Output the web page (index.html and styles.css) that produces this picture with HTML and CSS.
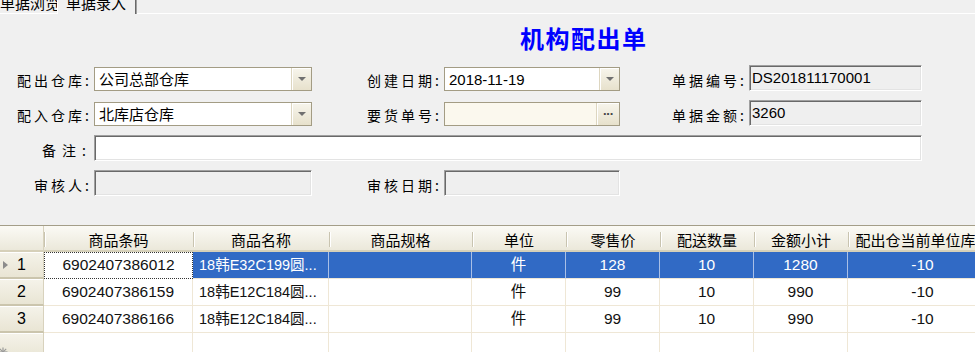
FILE: index.html
```html
<!DOCTYPE html>
<html lang="zh-CN">
<head>
<meta charset="utf-8">
<title>机构配出单</title>
<link rel="stylesheet" href="styles.css">
</head>
<body>
<div class="tabs">
  <div class="tab tab-browse"><span>单据浏览</span></div>
  <div class="tab tab-active"><span>单据录入</span></div>
  <div class="tab-rest"></div>
</div>

<h1 class="title">机构配出单</h1>

<div class="form">
  <label class="lbl">配出仓库:</label>
  <div class="combo"><span class="val">公司总部仓库</span><span class="dd"><i class="tri"></i></span></div>
  <label class="lbl">创建日期:</label>
  <div class="combo"><span class="val">2018-11-19</span><span class="dd"><i class="tri"></i></span></div>
  <label class="lbl">单据编号:</label>
  <div class="sunken">DS201811170001</div>

  <label class="lbl">配入仓库:</label>
  <div class="combo"><span class="val">北库店仓库</span><span class="dd"><i class="tri"></i></span></div>
  <label class="lbl">要货单号:</label>
  <div class="combo cream"><span class="val"></span><span class="dd dots">···</span></div>
  <label class="lbl">单据金额:</label>
  <div class="sunken">3260</div>

  <label class="lbl lbl-wide">备注:</label>
  <div class="sunken white span5"></div>

  <label class="lbl">审核人:</label>
  <div class="sunken"></div>
  <label class="lbl">审核日期:</label>
  <div class="sunken"></div>
</div>

<div class="grid">
  <div class="row head">
    <div class="rh corner"></div>
    <div class="hc">商品条码</div>
    <div class="hc">商品名称</div>
    <div class="hc">商品规格</div>
    <div class="hc">单位</div>
    <div class="hc">零售价</div>
    <div class="hc">配送数量</div>
    <div class="hc">金额小计</div>
    <div class="hc">配出仓当前单位库存</div>
  </div>
  <div class="row sel">
    <div class="rh"><i class="arrow"></i><span class="num">1</span></div>
    <div class="c ctr focus">6902407386012</div>
    <div class="c name">18韩E32C199圆...</div>
    <div class="c"></div>
    <div class="c ctr">件</div>
    <div class="c ctr">128</div>
    <div class="c ctr">10</div>
    <div class="c ctr">1280</div>
    <div class="c ctr">-10</div>
  </div>
  <div class="row">
    <div class="rh"><i class="arrow off"></i><span class="num">2</span></div>
    <div class="c ctr">6902407386159</div>
    <div class="c name">18韩E12C184圆...</div>
    <div class="c"></div>
    <div class="c ctr">件</div>
    <div class="c ctr">99</div>
    <div class="c ctr">10</div>
    <div class="c ctr">990</div>
    <div class="c ctr">-10</div>
  </div>
  <div class="row">
    <div class="rh"><i class="arrow off"></i><span class="num">3</span></div>
    <div class="c ctr">6902407386166</div>
    <div class="c name">18韩E12C184圆...</div>
    <div class="c"></div>
    <div class="c ctr">件</div>
    <div class="c ctr">99</div>
    <div class="c ctr">10</div>
    <div class="c ctr">990</div>
    <div class="c ctr">-10</div>
  </div>
  <div class="row">
    <div class="rh newrow"><svg class="star" width="10" height="10" viewBox="0 0 10 10"><g stroke="#9a9a9a" stroke-width="1.2"><line x1="5" y1="0.5" x2="5" y2="9.5"/><line x1="0.5" y1="5" x2="9.5" y2="5"/><line x1="1.8" y1="1.8" x2="8.2" y2="8.2"/><line x1="8.2" y1="1.8" x2="1.8" y2="8.2"/></g></svg></div>
    <div class="c"></div>
    <div class="c"></div>
    <div class="c"></div>
    <div class="c"></div>
    <div class="c"></div>
    <div class="c"></div>
    <div class="c"></div>
    <div class="c"></div>
  </div>
</div>
</body>
</html>
```
FILE: styles.css
```css
* { box-sizing: border-box; }

html, body {
  margin: 0;
  padding: 0;
}

body {
  width: 975px;
  height: 352px;
  overflow: hidden;
  background: #f0f0f0;
  color: #000;
  font-family: "Liberation Sans", "Noto Sans CJK SC", sans-serif;
}

/* ---------- tabs ---------- */
.tabs {
  display: flex;
  height: 14px;
}

.tab {
  height: 14px;
  overflow: hidden;
  font-family: "Noto Sans CJK SC", sans-serif;
  font-size: 15px;
  line-height: 15px;
  color: #000;
}

.tab span {
  display: block;
  margin-top: -5px;
  white-space: nowrap;
}

.tab-browse {
  width: 58px;
  height: 14px;
  padding-right: 5px;
  text-align: right;
  border-bottom: 1px solid #fff;
  border-right: 1px solid #fff;
}

.tab-active {
  width: 79px;
  padding-left: 8px;
  border-right: 1px solid #a0a0a0;
  box-shadow: inset -1px 0 0 #696969;
}

.tab-rest {
  flex: 1;
  height: 14px;
  border-bottom: 1px solid #fff;
}

/* ---------- title ---------- */
.title {
  margin: 10px 0 0;
  padding-left: 520px;
  font-family: "Noto Sans CJK SC", sans-serif;
  font-size: 24px;
  line-height: 28px;
  font-weight: bold;
  letter-spacing: 1.5px;
  color: #0000ff;
}

/* ---------- form ---------- */
.form {
  margin-top: 13px;
  display: grid;
  grid-template-columns: 94px 218px 132px 176px 129px 173px;
  grid-template-rows: repeat(4, 26px);
  row-gap: 9px;
}

.lbl {
  font-family: "Noto Sans CJK SC", sans-serif;
  font-size: 14px;
  line-height: 22px;
  padding-top: 4px;
  padding-right: 2px;
  letter-spacing: 3px;
  text-align: right;
  white-space: nowrap;
  color: #000;
}

.lbl-wide {
  letter-spacing: 6px;
}

.combo {
  align-self: end;
  height: 24px;
  display: flex;
  border: 1px solid #a39c84;
  background: #fff;
  font-size: 15px;
}

.combo.cream {
  background: #fbf8ee;
}

.combo .val {
  flex: 1;
  padding-left: 4px;
  line-height: 23px;
  white-space: nowrap;
  overflow: hidden;
}

.dd {
  width: 20px;
  display: flex;
  align-items: center;
  justify-content: center;
  background: linear-gradient(#f7f5ec, #e7e1cc);
  border-left: 1px solid #ddd6c0;
  box-shadow: inset 1px 1px 0 #fff;
}

.tri {
  width: 0;
  height: 0;
  border-left: 4px solid transparent;
  border-right: 4px solid transparent;
  border-top: 4px solid #707070;
}

.dd.dots {
  width: 23px;
  font-size: 13px;
  font-weight: bold;
  color: #444;
  letter-spacing: -1px;
  line-height: 22px;
}

.sunken {
  height: 26px;
  padding-left: 2px;
  font-size: 15px;
  line-height: 23px;
  background: #efefef;
  border-top: 1px solid #a0a0a0;
  border-left: 1px solid #a0a0a0;
  border-bottom: 1px solid #fff;
  border-right: 1px solid #fff;
  box-shadow: inset 1px 1px 0 #696969, inset -1px -1px 0 #e3e3e3;
  white-space: nowrap;
}

.sunken.white {
  background: #fff;
}

.span5 {
  grid-column: 2 / 7;
}

/* ---------- data grid ---------- */
.grid {
  margin-top: 29px;
  width: 1004px;
  border-top: 1px solid #a49e88;
  background: #fff;
  font-size: 15.5px;
}

.row {
  display: grid;
  grid-template-columns: 44px 149px 136px 143px 94px 94px 94px 94px 150px;
  height: 27px;
}

.row.head {
  height: 26px;
}

.hc {
  font-family: "Noto Sans CJK SC", sans-serif;
  font-size: 15px;
  line-height: 24px;
  padding-top: 2px;
  text-align: center;
  white-space: nowrap;
  overflow: hidden;
  color: #000;
  border-bottom: 2px solid #d6d0b9;
  background-image:
    linear-gradient(#c9c4b0, #c9c4b0),
    linear-gradient(#ffffff, #ffffff),
    linear-gradient(#fbfaf5, #ebe8da);
  background-size: 1px 15px, 1px 15px, 100% 100%;
  background-position: 0 6px, 1px 6px, 0 0;
  background-repeat: no-repeat;
}

.rh {
  display: flex;
  align-items: center;
  background: linear-gradient(#f5f3ea, #e9e5d4);
  border-bottom: 2px solid #cbc5ad;
  border-right: 1px solid #d8d2bd;
  box-shadow: inset 0 1px 0 #fff;
  color: #000;
}

.rh.corner {
  border-bottom: 2px solid #d6d0b9;
  background: linear-gradient(#fbfaf5, #ebe8da);
  box-shadow: none;
}

.arrow {
  width: 0;
  height: 0;
  margin-left: 3px;
  border-top: 4px solid transparent;
  border-bottom: 4px solid transparent;
  border-left: 5px solid #8c8c8c;
}

.arrow.off {
  border-left-color: transparent;
}

.num {
  flex: 1;
  margin-right: 8px;
  text-align: center;
  font-size: 16px;
}

.newrow {
  align-items: flex-end;
}

.star {
  margin-left: -2px;
  margin-bottom: 1px;
  display: block;
}

.c {
  line-height: 26px;
  padding: 0 6px;
  white-space: nowrap;
  overflow: hidden;
  color: #111;
  border-right: 1px solid #efe7d6;
  border-bottom: 1px solid #efe7d6;
}

.c.ctr {
  text-align: center;
}

.c.name {
  padding: 0 0 0 6px;
  font-size: 14.5px;
}

.sel .c {
  background: #316ac5;
  color: #fff;
  border-right-color: #a9bfe6;
  border-bottom-color: #efe7d6;
}

.sel .c.focus {
  background: #fff;
  color: #111;
  border: 1px dotted #333;
  line-height: 24px;
}
```
